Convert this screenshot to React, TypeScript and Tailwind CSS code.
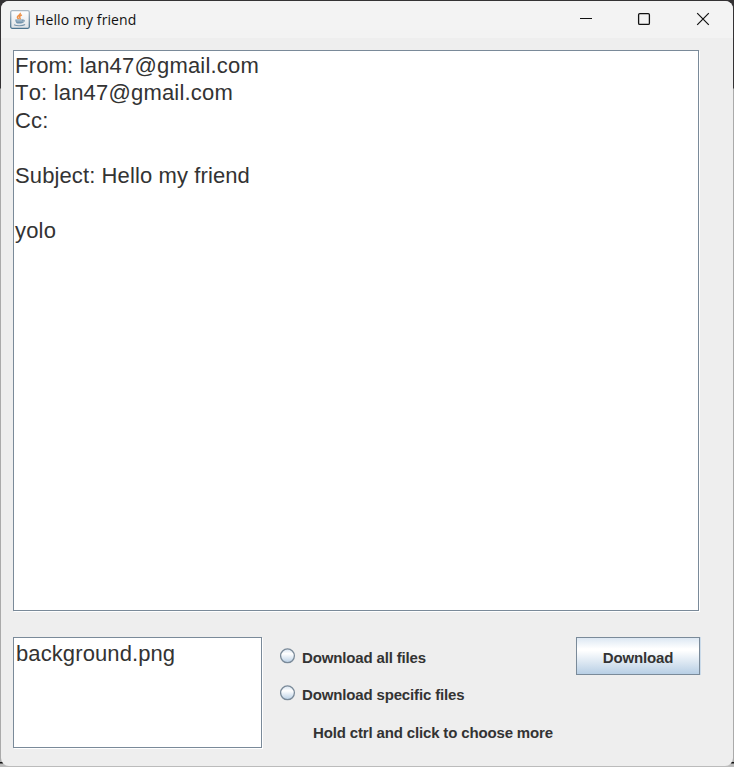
import React from "react";

function JavaIcon() {
  return (
    <svg width="20" height="19" viewBox="0 0 20 19" className="block">
      <defs>
        <linearGradient id="tile" x1="0" y1="0" x2="0" y2="1">
          <stop offset="0" stopColor="#ffffff" />
          <stop offset="1" stopColor="#dfe3e7" />
        </linearGradient>
        <linearGradient id="edge" x1="0" y1="0" x2="0" y2="1">
          <stop offset="0" stopColor="#a9b7c2" />
          <stop offset="1" stopColor="#4d748f" />
        </linearGradient>
      </defs>
      <rect x="0.7" y="0.7" width="18.6" height="17.6" rx="1.5" fill="url(#tile)" stroke="url(#edge)" strokeWidth="1.3" />
      <path d="M10.2 2.800c1 2-2.900 2.700-2.800 4.400 0 .8.8 1.300 1.300 1.900M11.900 4.900c-2 1-3 1.700-2 2.800.5.500.3 1-.2 1.500" fill="none" stroke="#ee9148" strokeWidth="1.500" />
      <path d="M5.300 9.600h7.700c0 2-.6 3.600-1.700 4H7.200c-1.200-.5-1.900-2-1.900-4Z" fill="#7294ae" />
      <path d="M6.500 10.900h5.500" stroke="#c7d5df" strokeWidth=".8" />
      <path d="M12.700 10.200c2.100-.6 2.300 1.900-.8 2.400M4 14.800c2.500 1.300 8.500 1.300 11.100-.2" fill="none" stroke="#7896ad" strokeWidth="1.100" />
    </svg>
  );
}

function WindowControls() {
  return (
    <div className="ml-auto mr-px flex h-full items-center">
      <svg width="48" height="37" viewBox="0 0 48 37" className="block">
        <path d="M9 17.500h12" stroke="#111" strokeWidth="1" />
      </svg>
      <svg width="58" height="37" viewBox="0 0 58 37" className="block">
        <rect x="19.600" y="12.600" width="10.800" height="10.800" rx="1.200" fill="none" stroke="#111" strokeWidth="1.300" />
      </svg>
      <svg width="55" height="37" viewBox="0 0 55 37" className="block">
        <path d="M20.200 12.200l11.600 11.600M31.800 12.200L20.200 23.800" stroke="#111" strokeWidth="1.200" />
      </svg>
    </div>
  );
}

function Radio({ label }: { label: string }) {
  return (
    <label className="flex h-[17px] items-center">
      <svg width="16" height="16" viewBox="0 0 16 16" className="-mt-[3px] mr-[6px] block shrink-0">
        <defs>
          <linearGradient id="radio" x1="0" y1="0" x2="0" y2="1">
            <stop offset="0" stopColor="#d5e2ef" />
            <stop offset=".35" stopColor="#ffffff" />
            <stop offset="1" stopColor="#b8cfe5" />
          </linearGradient>
        </defs>
        <circle cx="7.500" cy="7.800" r="6.900" fill="url(#radio)" stroke="#7a8a99" strokeWidth="1.300" />
      </svg>
      <span>{label}</span>
    </label>
  );
}

export default function App() {
  return (
    <div className="h-[767px] w-[734px] overflow-hidden bg-[linear-gradient(to_bottom,#343234_0px,#343234_88px,#aaa_89px,#aaa_762px,#111_762px,#111_763px,#bbb_764px)] p-px font-['Liberation_Sans',Arial,sans-serif] text-[#333]">
      <div className="flex h-[765px] w-[732px] flex-col overflow-hidden rounded-[8px] bg-[#eee]">
        <header className="flex h-[37px] shrink-0 items-center bg-[#f3f3f3] pl-[9px]">
          <JavaIcon />
          <span className="ml-[5px] whitespace-nowrap font-['Open_Sans',sans-serif] text-[14px] leading-[20px] tracking-[0.1px] text-[#111]">Hello my friend</span>
          <WindowControls />
        </header>
        <main className="flex flex-col pl-3 pt-3">
          <div className="h-[561px] w-[686px] whitespace-pre border border-[#7a8a99] bg-white pl-px pt-px text-[22px] leading-[27.48px] tracking-[0.19px] shadow-[1px_1px_0_#fff] [font-kerning:none]">
            {"From: lan47@gmail.com\nTo: lan47@gmail.com\nCc:\n\n"}
            <span className="tracking-[0.11px]">Subject: Hello my friend</span>
            {"\n\nyolo"}
          </div>
          <div className="mt-[26px] flex">
            <div className="h-[111px] w-[249px] border border-[#7a8a99] bg-white pl-0.5 pt-0.5 text-[22px] leading-[27px] tracking-[0.1px] shadow-[1px_1px_0_#fff]">background.png</div>
            <div className="ml-[18px] flex w-[296px] flex-col gap-[20px] whitespace-nowrap pt-[12px] text-[15px] font-bold leading-[17px] tracking-[-0.15px]">
              <Radio label="Download all files" />
              <Radio label="Download specific files" />
              <span className="pl-[33px] pt-px">Hold ctrl and click to choose more</span>
            </div>
            <button className="h-[38px] w-[124px] border border-[#7a8a99] bg-[linear-gradient(to_bottom,#dde8f3_0%,#ffffff_30%,#ffffff_35%,#b8cfe5_100%)] pt-0.5 text-[15px] font-bold leading-[17px] tracking-[-0.15px] shadow-[1px_0_0_#cbdbea]">Download</button>
          </div>
        </main>
      </div>
    </div>
  );
}
